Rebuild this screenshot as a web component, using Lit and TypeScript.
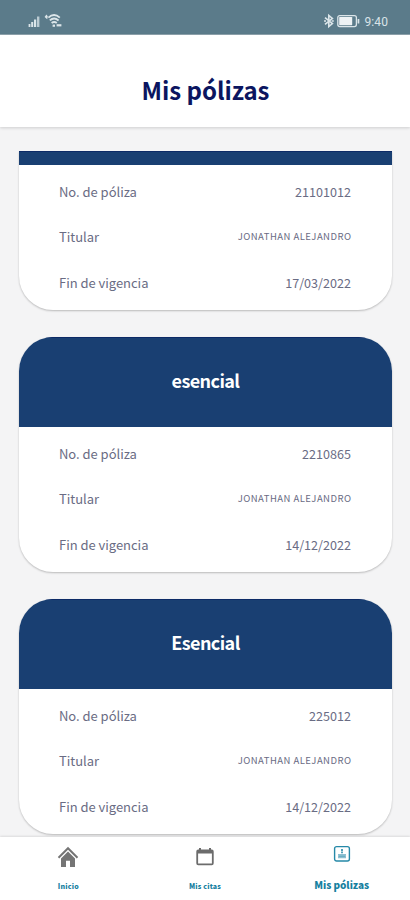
import { LitElement, html, css, svg } from "lit";
import { customElement, property } from "lit/decorators.js";

interface Policy {
  plan?: string;
  id: string;
  holder: string;
  end: string;
}

const POLICIES: Policy[] = [
  { id: "21101012", holder: "JONATHAN ALEJANDRO", end: "17/03/2022" },
  { plan: "esencial", id: "2210865", holder: "JONATHAN ALEJANDRO", end: "14/12/2022" },
  { plan: "Esencial", id: "225012", holder: "JONATHAN ALEJANDRO", end: "14/12/2022" },
];

@customElement("status-bar")
class StatusBar extends LitElement {
  static styles = css`
    :host {
      display: flex;
      justify-content: space-between;
      flex: none;
      height: 35px;
      box-sizing: border-box;
      padding: 13px 22px 0 28px;
      background: #5b7b8a;
      border-bottom: 1px solid #8fa4ae;
      color: #d9e3e8;
      font: 12px/16px "Roboto", sans-serif;
    }
    .group { display: flex; height: 16px; align-items: center; }
    svg { display: block; fill: none; stroke: #dbe5e9; }
    .time { margin-left: 2px; letter-spacing: 0.1px; line-height: 18px; padding-top: 1px; }
  `;
  render() {
    return html`
      <div class="group">
        <svg width="36" height="16" viewBox="0 0 36 16">
          <g fill="#dbe5e9" stroke="none">
            <rect x="0.6" y="11" width="1.8" height="3" />
            <rect x="3.2" y="9" width="2" height="5" />
            <rect x="6" y="6.5" width="2.2" height="7.5" />
            <rect x="9" y="3.5" width="2.4" height="10.5" opacity=".75" />
            <path d="M16.600 4l1.800-2.400 1.400 1.700-.6 3z" />
            <rect x="24.600" y="11.600" width="2.400" height="2.200" />
            <rect x="28.600" y="11.200" width="4.800" height="2.200" />
          </g>
          <path d="M20.400 4.600q5.600-5.200 11.400 0M21.800 7.400q4.200-3.600 8.800 0M23.600 10q2.600-2 5.200 0" stroke-width="1.900" />
        </svg>
      </div>
      <div class="group">
        <svg width="39" height="16" viewBox="0 0 39 16">
          <path d="M2 4.600l7.400 6-3.600 3V2.400l3.600 3L2 11.400M1 8h2M8.800 8h2" stroke-width="1.600" />
          <rect x="14.800" y="2.600" width="18.600" height="11" rx="2" stroke-width="1.300" />
          <rect x="16.200" y="4" width="13" height="8.200" rx=".6" fill="#eef2f4" stroke="none" />
          <rect x="34.600" y="6" width="1.700" height="4.600" rx=".5" fill="#dbe5e9" stroke="none" />
        </svg>
        <span class="time">9:40</span>
      </div>
    `;
  }
}

@customElement("policy-card")
class PolicyCard extends LitElement {
  @property({ attribute: false }) policy!: Policy;
  static styles = css`
    :host {
      display: block;
      flex: none;
      border-radius: 34px;
      overflow: hidden;
      background: #fff;
      box-shadow: 0 1px 2px rgba(0, 0, 0, 0.24);
      color: #6a6c84;
    }
    :host(.scrolled) { border-radius: 0 0 34px 34px; }
    .head {
      height: 90px;
      display: flex;
      align-items: center;
      justify-content: center;
      box-sizing: border-box;
      padding-bottom: 5px;
      background: #193f72;
      box-shadow: inset 0 1px #0c2a66;
      color: #fff;
      font-size: 18px;
      letter-spacing: -0.6px;
      font-weight: 700;
    }
    .strip { height: 14px; padding: 0; }
    .rows { height: 145px; box-sizing: border-box; padding: 4px 41px 0 40px; }
    .row {
      display: flex;
      justify-content: space-between;
      align-items: center;
      height: 45.4px;
      font-size: 12.6px;
      white-space: nowrap;
    }
    .label { font-size: 13px; letter-spacing: -0.03px; }
    .row:nth-child(2) { padding-bottom: 1px; height: 44.4px; }
    .small { font-size: 9.5px; letter-spacing: 0.46px; margin-right: -0.46px; padding-bottom: 1.5px; }
  `;
  render() {
    const p = this.policy;
    return html`
      <div class="head ${p.plan ? "" : "strip"}">${p.plan}</div>
      <div class="rows">
        <div class="row"><span class="label">No. de póliza</span><span>${p.id}</span></div>
        <div class="row"><span class="label">Titular</span><span class="small">${p.holder}</span></div>
        <div class="row"><span class="label">Fin de vigencia</span><span>${p.end}</span></div>
      </div>
    `;
  }
}

const HOME = svg`<svg width="22" height="22" viewBox="0 0 22 22" fill="#757575">
  <path d="M11 .8L21.200 11l-1.400 1.400L11 3.700l-8.800 8.700L.8 11z" />
  <path d="M11 5.600l7 6.900V21h-5v-6.200H9V21H4v-8.500z" />
</svg>`;
const CALENDAR = svg`<svg width="22" height="22" viewBox="0 0 22 22" fill="#6c6c6c" fill-rule="evenodd">
  <path d="M5 2h2v1.600h8V2h2v1.600h.8q1.900 0 1.900 1.900v11.800q0 1.900-1.900 1.900H4.200q-1.900 0-1.900-1.900V5.500q0-1.900 1.900-1.900H5zM4.100 7.400v10h13.800v-10z" />
</svg>`;
const POLICY = svg`<svg width="18" height="18" viewBox="0 0 18 18" fill="none" stroke="#2689a8">
  <rect x="1.600" y="1.600" width="14.800" height="14.400" rx="2" stroke-width="1.400" />
  <path d="M9 4v2M9 6.500v1.700" stroke-width="1.600" />
  <path d="M5 9.600h8M5 12.600h8" stroke-width="1.200" stroke="#8dbfd0" />
  <path d="M5.200 11.100h7.600" stroke-width="1.600" stroke="#5ba5bd" />
</svg>`;

@customElement("bottom-nav")
class BottomNav extends LitElement {
  static styles = css`
    :host {
      display: grid;
      flex: none;
      grid-template-columns: repeat(3, 1fr);
      height: 63px;
      box-sizing: border-box;
      background: #fff;
      box-shadow: 0 -1px 2px rgba(0, 0, 0, 0.1);
      color: #16809f;
      font-weight: 900;
      position: relative;
    }
    .tab { display: flex; flex-direction: column; align-items: center; padding-top: 9px; }
    .icon { height: 22px; display: flex; }
    .text { font-size: 7px; line-height: 10px; margin-top: 13px; letter-spacing: 0.2px; }
    .active { padding-top: 8px; }
    .active .text { font-size: 10px; line-height: 14px; margin-top: 11px; letter-spacing: -0.05px; }
  `;
  render() {
    return html`
      <div class="tab"><span class="icon">${HOME}</span><span class="text">Inicio</span></div>
      <div class="tab"><span class="icon">${CALENDAR}</span><span class="text">Mis citas</span></div>
      <div class="tab active"><span class="icon">${POLICY}</span><span class="text">Mis pólizas</span></div>
    `;
  }
}

@customElement("app-root")
class AppRoot extends LitElement {
  static styles = css`
    :host {
      display: flex;
      flex-direction: column;
      height: 900px;
      overflow: hidden;
      background: #f4f4f5;
      font-family: "Noto Sans CJK JP", "Noto Sans", sans-serif;
    }
    .title {
      display: flex;
      align-items: center;
      justify-content: center;
      flex: none;
      height: 92px;
      box-sizing: border-box;
      padding: 17px 0 0 1px;
      margin: 0;
      background: #fff;
      box-shadow: 0 1px 3px rgba(0, 0, 0, 0.16);
      color: #0b1560;
      font-size: 24px;
      letter-spacing: -0.05px;
      font-weight: 700;
    }
    .viewport { flex: 1; min-height: 0; margin-top: 24px; overflow: hidden; }
    .list {
      display: flex;
      flex-direction: column;
      gap: 27px;
      padding: 0 18px 0 19px;
    }
  `;
  render() {
    return html`
      <status-bar></status-bar>
      <h1 class="title">Mis pólizas</h1>
      <div class="viewport">
        <div class="list">
          ${POLICIES.map((p) => html`<policy-card class=${p.plan ? "" : "scrolled"} .policy=${p}></policy-card>`)}
        </div>
      </div>
      <bottom-nav></bottom-nav>
    `;
  }
}
